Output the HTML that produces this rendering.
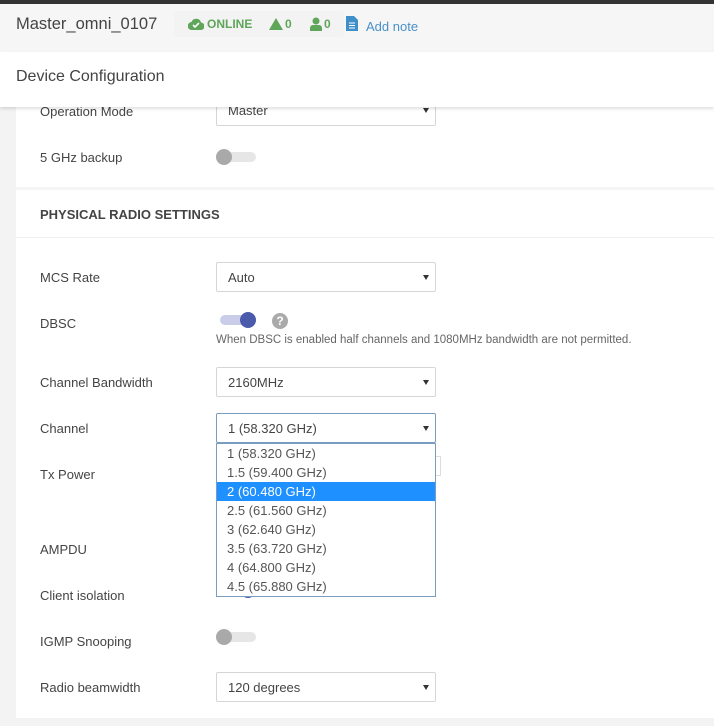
<!DOCTYPE html>
<html><head><style>
*{box-sizing:border-box;margin:0;padding:0}
body{width:714px;height:726px;overflow:hidden;background:#f3f3f3;font-family:"Liberation Sans",sans-serif;color:#444;position:relative}
.abs{position:absolute}
.lbl{position:absolute;left:40px;font-size:13px;color:#444;line-height:16px}
.sel{position:absolute;left:216px;width:220px;height:30px;border:1px solid #d6d6d6;border-radius:2px;background:#fff;font-size:13px;padding-left:11px;line-height:30px;color:#444}
.sel:after{content:"";position:absolute;right:6px;top:12px;border-left:3px solid transparent;border-right:3px solid transparent;border-top:5px solid #333}
.tg{position:absolute;left:216px;width:40px;height:16px}
.tg .tr{position:absolute;left:4px;right:0;top:3px;height:10px;border-radius:5px;background:#e6e6e6}
.tg .kn{position:absolute;left:0;top:0;width:16px;height:16px;border-radius:50%;background:#a9a9a9}
.tg.on .tr{background:#c9cdea}
.tg.on .kn{left:24px;background:#4b5aab}
.dd{position:absolute;left:216px;top:443px;width:220px;height:154px;border:1px solid #7a9cc0;background:#fff;font-size:13px}
.dd div{height:19px;line-height:19px;padding-left:10px;color:#555}
.dd .hi{background:#1e90ff;color:#fff}
</style></head><body>
<div class="abs" style="left:0;top:0;width:714px;height:4px;background:#333"></div>
<div class="abs" style="left:0;top:4px;width:714px;height:48px;background:#f6f6f6"></div>
<div class="abs" style="left:16px;top:15px;font-size:16.5px;color:#444">Master_omni_0107</div>
<div class="abs" style="left:174px;top:11px;width:170px;height:26px;background:#f3f3f3;border-radius:2px"></div>
<svg class="abs" style="left:188px;top:18px" width="16" height="12" viewBox="0 0 16 12"><path d="M4 12a4 4 0 0 1-.5-8A5 5 0 0 1 13 4.5 3.7 3.7 0 0 1 12.5 12z" fill="#5fa55a"/><path d="M5 7l2 2 4-4" stroke="#fff" stroke-width="1.6" fill="none"/></svg>
<div class="abs" style="left:207px;top:17px;font-size:12px;font-weight:bold;color:#5fa55a">ONLINE</div>
<svg class="abs" style="left:269px;top:18px" width="14" height="12"><path d="M7 0L14 12H0z" fill="#5fa55a"/></svg>
<div class="abs" style="left:285px;top:17px;font-size:12px;font-weight:bold;color:#5fa55a">0</div>
<svg class="abs" style="left:310px;top:17px" width="12" height="14"><circle cx="6" cy="4" r="3.5" fill="#5fa55a"/><path d="M0 14v-3a3 3 0 0 1 3-3h6a3 3 0 0 1 3 3v3z" fill="#5fa55a"/></svg>
<div class="abs" style="left:324px;top:17px;font-size:12px;font-weight:bold;color:#5fa55a">0</div>
<svg class="abs" style="left:346px;top:16px" width="12" height="15"><path d="M0 0h8l4 4v11H0z" fill="#3f8fc8"/><path d="M3 7h6M3 9.5h6M3 12h6" stroke="#fff" stroke-width="1"/></svg>
<div class="abs" style="left:366px;top:19px;font-size:13px;color:#4a90c8">Add note</div>
<div class="abs" style="left:0;top:52px;width:714px;height:55px;background:#fff;box-shadow:0 2px 3px rgba(0,0,0,.12);z-index:2"></div>
<div class="abs" style="left:16px;top:68px;font-size:16px;color:#444;z-index:3">Device Configuration</div>
<div class="abs" style="left:16px;top:107px;width:698px;height:611px;background:#fff"></div>
<div class="abs" style="left:16px;top:187px;width:698px;height:3px;background:#f5f5f5"></div>
<div class="abs" style="left:16px;top:237px;width:698px;height:1px;background:#f0f0f0"></div>
<div class="lbl" style="top:104px">Operation Mode</div>
<div class="sel" style="top:96px;border-top:none">Master</div>
<div class="lbl" style="top:150px">5 GHz backup</div>
<div class="tg" style="top:149px"><div class="tr"></div><div class="kn"></div></div>
<div class="abs" style="left:40px;top:207px;font-size:13px;font-weight:bold;color:#444">PHYSICAL RADIO SETTINGS</div>
<div class="lbl" style="top:270px">MCS Rate</div>
<div class="sel" style="top:262px">Auto</div>
<div class="lbl" style="top:316px">DBSC</div>
<div class="tg on" style="top:312px"><div class="tr"></div><div class="kn"></div></div>
<div class="abs" style="left:272px;top:313px;width:16px;height:16px;border-radius:50%;background:#aaa;color:#fff;font-size:12px;font-weight:bold;text-align:center;line-height:16px">?</div>
<div class="abs" style="left:216px;top:334px;font-size:11.5px;color:#666">When DBSC is enabled half channels and 1080MHz bandwidth are not permitted.</div>
<div class="lbl" style="top:375px">Channel Bandwidth</div>
<div class="sel" style="top:367px">2160MHz</div>
<div class="lbl" style="top:421px">Channel</div>
<div class="sel" style="top:413px;border-color:#7a9cc0">1 (58.320 GHz)</div>
<div class="lbl" style="top:467px">Tx Power</div>
<div class="abs" style="left:430px;top:456px;width:11px;height:20px;border:1px solid #ddd;border-left:none"></div>
<div class="lbl" style="top:542px">AMPDU</div>
<div class="lbl" style="top:588px">Client isolation</div>
<div class="abs" style="left:240px;top:590px;width:16px;height:8px;border-radius:0 0 8px 8px;background:#4b5aab"></div>
<div class="dd"><div>1 (58.320 GHz)</div><div>1.5 (59.400 GHz)</div><div class="hi">2 (60.480 GHz)</div><div>2.5 (61.560 GHz)</div><div>3 (62.640 GHz)</div><div>3.5 (63.720 GHz)</div><div>4 (64.800 GHz)</div><div>4.5 (65.880 GHz)</div></div>
<div class="lbl" style="top:634px">IGMP Snooping</div>
<div class="tg" style="top:629px"><div class="tr"></div><div class="kn"></div></div>
<div class="lbl" style="top:680px">Radio beamwidth</div>
<div class="sel" style="top:672px">120 degrees</div>
</body></html>
